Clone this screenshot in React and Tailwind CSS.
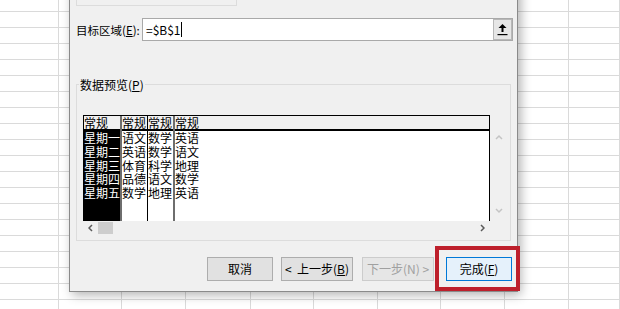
import React from "react";

const font = "font-['Noto_Sans_CJK_SC','Noto_Sans',sans-serif]";

const colWidths = [
  "59px", "63px", "64px", "65px", "63px", "64px", "63px", "64px", "64px", "1fr",
];

function Sheet() {
  const cells = [];
  for (let r = 0; r < 20; r++) {
    for (let c = 0; c < colWidths.length; c++) {
      cells.push(
        <div key={`${r}-${c}`} className="border-r border-b border-[#dadada]" />
      );
    }
  }
  return (
    <div className="grid h-full grid-cols-[59px_63px_64px_65px_63px_64px_63px_64px_64px_1fr] grid-rows-[12px_repeat(19,16px)]">
      {cells}
    </div>
  );
}

function Chevron({ dir, className }) {
  const pts = {
    up: "1,5 4,2 7,5",
    down: "1,1 4,4 7,1",
    left: "4,1 1,4 4,7",
    right: "1,1 4,4 1,7",
  }[dir];
  const vertical = dir === "up" || dir === "down";
  return (
    <svg
      width={vertical ? 8 : 5}
      height={vertical ? 6 : 8}
      viewBox={vertical ? "0 0 8 6" : "0 0 5 8"}
      className={className}
    >
      <polyline points={pts} fill="none" stroke="currentColor" strokeWidth="1.5" />
    </svg>
  );
}

const days = ["星期一", "星期二", "星期三", "星期四", "星期五"];
const col2 = ["语文", "英语", "体育", "品德", "数学"];
const col3 = ["数学", "数学", "科学", "语文", "地理"];
const col4 = ["英语", "语文", "地理", "数学", "英语"];

function Column({ items, className, bodyClass }) {
  return (
    <div className={`flex flex-col ${className}`}>
      <div className="h-[15px] border-b-2 border-black bg-[#f0f0f0] leading-[13px]">
        常规
      </div>
      <div className={`flex-1 ${bodyClass}`}>
        {items.map((t, i) => (
          <div key={i} className="h-[13.75px] leading-[13.75px] whitespace-nowrap">
            {t}
          </div>
        ))}
      </div>
    </div>
  );
}

function Btn({ children, className }) {
  return (
    <div
      className={`flex h-[24px] items-center justify-center whitespace-nowrap border text-[12px] ${className}`}
    >
      {children}
    </div>
  );
}

export default function App() {
  return (
    <div className={`relative h-[309px] w-[620px] overflow-hidden bg-white ${font}`}>
      <Sheet />

      <div className="absolute left-[69px] top-[-20px] flex h-[312px] w-[449px] flex-col border border-[#8a8a8a] bg-[#f0f0f0] text-[12px] text-black shadow-[3px_3px_10px_rgba(0,0,0,0.3)]">
        <div className="ml-[6px] h-[25px] w-[161px] border-x border-b border-[#dcdcdc]" />

        <div className="mt-[12px] flex h-[23px] items-center pl-[6px]">
          <div className="w-[66px] whitespace-nowrap text-[11.5px] leading-[16px]">
            目标区域(<span className="underline">E</span>):
          </div>
          <div className="flex h-[23px] w-[371px] items-center border border-[#a9a9a9] bg-white">
            <span className="pl-[3px] leading-[16px]">=$B$1</span>
            <span className="h-[15px] w-px bg-black" />
            <div className="ml-auto flex h-[21px] w-[19px] items-center justify-center border border-[#b8b8b8] bg-[#e6e6e6]">
              <svg width="11" height="13" viewBox="0 0 11 13">
                <polygon points="5.5,1 1.5,5 9.5,5" fill="#000" />
                <rect x="4.5" y="5" width="2" height="4" fill="#000" />
                <rect x="0.5" y="11" width="10" height="1.2" fill="#000" />
              </svg>
            </div>
          </div>
        </div>

        <div className="relative ml-[6px] mt-[43px] h-[157px] w-[435px] border border-[#dcdcdc] pl-[6px] pt-[30px]">
          <span className="absolute left-[2px] top-[-8px] whitespace-nowrap bg-[#f0f0f0] px-px leading-[16px]">
            数据预览(<span className="underline">P</span>)
          </span>

          <div className="flex w-[424px] flex-col">
            <div className="flex h-[106px]">
              <div className="flex w-[407px] border-x border-t border-black bg-white leading-[13px]">
                <Column
                  items={days}
                  className="w-[38px] border-r-2 border-[#6e6e6e]"
                  bodyClass="bg-black text-white"
                />
                <Column items={col2} className="w-[26px] border-r border-black" />
                <Column items={col3} className="w-[27px] border-r-2 border-[#6e6e6e]" />
                <Column items={col4} className="flex-1" />
              </div>
              <div className="flex w-[17px] flex-col items-center pb-[7px] pt-[19px] text-[#c4c4c4]">
                <Chevron dir="up" />
                <Chevron dir="down" className="mt-auto" />
              </div>
            </div>
            <div className="flex h-[13px] w-[407px] items-center pl-[5px] pr-[5px] text-[#5a5a5a]">
              <Chevron dir="left" />
              <div className="ml-[5px] h-[12px] w-[15px] bg-[#cdcdcd]" />
              <Chevron dir="right" className="ml-auto" />
            </div>
          </div>
        </div>

        <div className="mt-[16px] flex pl-[137px]">
          <Btn className="w-[66px] border-[#adadad] bg-[#e1e1e1]">取消</Btn>
          <Btn className="ml-[8px] w-[72px] border-[#adadad] bg-[#e1e1e1]">
            &lt;&nbsp; 上一步(<span className="underline">B</span>)
          </Btn>
          <Btn className="ml-[9px] w-[72px] border-[#cccccc] bg-[#e6e6e6] text-[#a0a0a0]">
            下一步(N) &gt;
          </Btn>
          <Btn className="ml-[12px] w-[66px] border-[#0078d7] bg-[#e5f1fb]">
            完成(<span className="underline">F</span>)
          </Btn>
        </div>
      </div>

      <div className="absolute left-[435px] top-[246px] h-[45px] w-[85px] border-4 border-[#bd1f2b]" />
    </div>
  );
}
